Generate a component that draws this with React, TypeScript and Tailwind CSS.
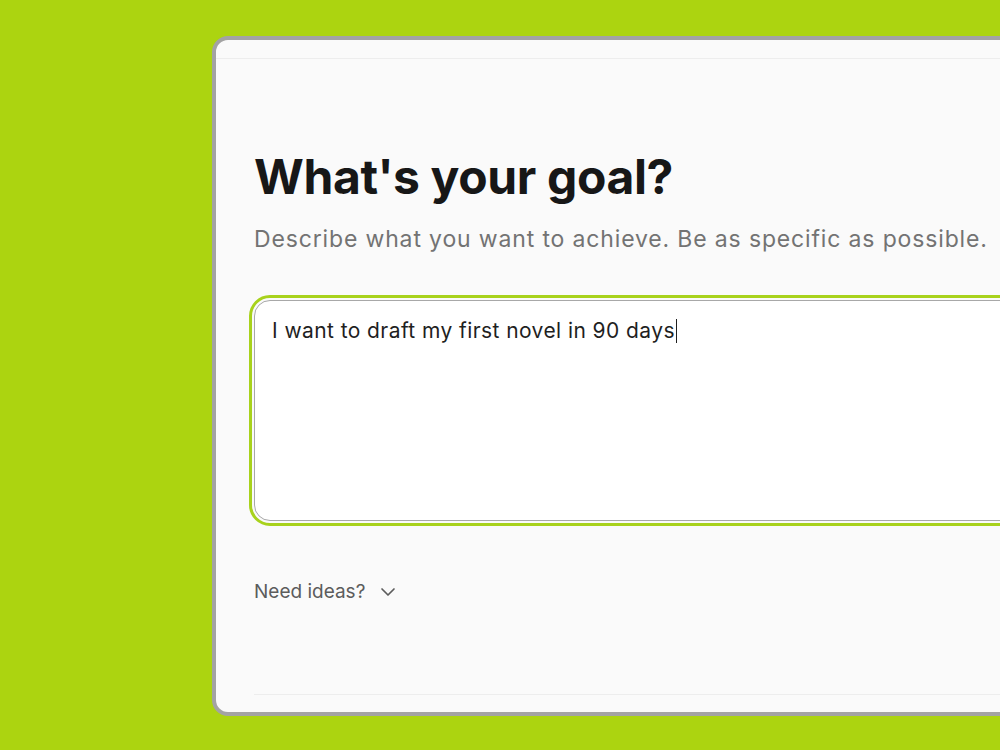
import { ChevronDown } from 'lucide-react'

export default function App() {
  return (
    <div
      className="w-[1000px] h-[750px] overflow-hidden bg-[#acd410] pt-[36px] pl-[212px]"
      style={{ fontFamily: 'Inter, "Noto Sans", sans-serif' }}
    >
      <div className="w-[900px] h-[680px] rounded-2xl border-4 border-[#a3a3a3] bg-[#fafafa] flex flex-col">
        <div className="h-[19px] border-b border-[#ededed]" />
        <div className="flex-1 pl-[38px] pt-[94px] flex flex-col">
          <h1 className="text-[48px] leading-[48px] font-bold tracking-[-0.008em] text-[#171717]">
            What's your goal?
          </h1>
          <p className="mt-[24px] text-[23px] leading-[28px] tracking-[0.037em] text-[#737373]">
            Describe what you want to achieve. Be as specific as possible.
          </p>
          <div className="mt-[47px] mr-[-40px] rounded-[16px] outline-[3px] outline-[#a8d21c] outline-offset-2 border border-[#a8a8a8] bg-white h-[221px] px-[17px] pt-[15px]">
            <p className="text-[21px] leading-[30px] tracking-[0.02em] text-[#1f1f1f]">
              I want to draft my first novel in 90 days
              <span className="inline-block w-[1.5px] h-[24px] bg-[#1f1f1f] align-[-5px] ml-[1px]" />
            </p>
          </div>
          <button className="mt-[57px] flex items-center gap-[11px] text-[19px] text-[#5c5c5c] self-start">
            Need ideas?
            <ChevronDown size={24} strokeWidth={1.7} />
          </button>
          <div className="flex-1" />
          <div className="border-t border-[#ededed] mb-[17px]" />
        </div>
      </div>
    </div>
  )
}
